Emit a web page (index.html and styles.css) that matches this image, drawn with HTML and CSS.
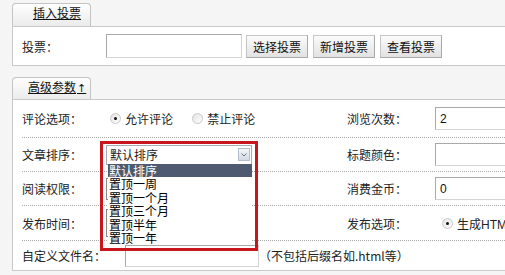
FILE: index.html
```html
<!DOCTYPE html>
<html lang="zh-CN">

<head>
    <meta charset="UTF-8">
    <title>高级参数</title>
    <link rel="stylesheet" href="styles.css">
</head>

<body>
    <div class="page">
        <div class="tab"><a href="#">插入投票</a></div>
        <div class="panel vote">
            <span class="label">投票：</span>
            <input type="text" class="text vote-input">
            <button class="btn">选择投票</button>
            <button class="btn">新增投票</button>
            <button class="btn">查看投票</button>
        </div>

        <div class="tab tab-adv"><a href="#">高级参数<span class="arrow">↑</span></a></div>
        <div class="panel params">
            <div class="row row-first">
                <div class="label">评论选项：</div>
                <div class="field">
                    <label class="radio"><input type="radio" name="comment" checked>允许评论</label>
                    <label class="radio radio-off"><input type="radio" name="comment">禁止评论</label>
                </div>
                <div class="label-r">浏览次数：</div>
                <div class="field-r"><input type="text" class="text short" value="2"></div>
            </div>
            <div class="row">
                <div class="label">文章排序：</div>
                <div class="field">
                    <div class="select">
                        <span class="select-value">默认排序</span>
                        <span class="select-arrow">
                            <svg width="6" height="4" viewBox="0 0 6 4"><path d="M0.5 0.5 L3 3 L5.5 0.5" fill="none" stroke="#6d7480" stroke-width="1"/></svg>
                        </span>
                        <ul class="dropdown">
                            <li class="active">默认排序</li>
                            <li>置顶一周</li>
                            <li>置顶一个月</li>
                            <li>置顶三个月</li>
                            <li>置顶半年</li>
                            <li>置顶一年</li>
                        </ul>
                        <div class="mark"></div>
                    </div>
                </div>
                <div class="label-r">标题颜色：</div>
                <div class="field-r"><input type="text" class="text short"></div>
            </div>
            <div class="row">
                <div class="label">阅读权限：</div>
                <div class="field"><span class="hidden-box box-read"></span></div>
                <div class="label-r">消费金币：</div>
                <div class="field-r"><input type="text" class="text short" value="0"></div>
            </div>
            <div class="row row-time">
                <div class="label">发布时间：</div>
                <div class="field"><span class="hidden-box box-time"></span></div>
                <div class="label-r">发布选项：</div>
                <div class="field-r">
                    <label class="radio"><input type="radio" name="publish" checked>生成HTML　仅动态浏览</label>
                </div>
            </div>
            <div class="row-last">
                <span class="label">自定义文件名：</span>
                <input type="text" class="text file-input">
                <span class="hint">（不包括后缀名如.html等）</span>
            </div>
        </div>
    </div>
</body>

</html>
```

FILE: styles.css
```css
* {
    box-sizing: border-box;
}

body {
    margin: 0;
    background: #f5f5f5;
    font: 12px "Liberation Sans", "Noto Sans CJK SC", sans-serif;
    color: #222;
    overflow: hidden;
}

.page {
    width: 505px;
    padding: 3px 0 0 12px;
}

/* 选项卡 */
.tab {
    width: 79px;
    height: 23px;
    padding-left: 20px;
    border: 1px solid #c4c4c4;
    border-bottom: 0;
    border-radius: 4px 4px 0 0;
    background: linear-gradient(#fefefe, #ebebeb);
    line-height: 21px;
    white-space: nowrap;
}

.tab a {
    color: #111;
}

.tab-adv {
    height: 22px;
    margin-top: 11px;
    padding-left: 15px;
    line-height: 20px;
}

.arrow {
    margin-left: 1px;
    font-family: "DejaVu Sans", sans-serif;
    font-size: 11px;
}

.panel {
    background: #fff;
    border: 1px solid #c9c9c9;
    border-right: 0;
}

.text {
    height: 23px;
    padding: 0 4px;
    border: 1px solid #a9a9a9;
    border-right-color: #d4d4d4;
    border-bottom-color: #d4d4d4;
    background: #fff;
    font: 12px "Liberation Sans", sans-serif;
    color: #111;
    outline: none;
}

/* 投票 */
.vote {
    display: flex;
    align-items: center;
    height: 40px;
    padding-left: 9px;
}

.vote .label {
    width: 84px;
}

.vote-input {
    width: 136px;
    height: 24px;
}

.btn {
    height: 23px;
    margin-left: 5px;
    padding: 0 6px;
    border: 1px solid #c6c6c6;
    border-right-color: #a8a8a8;
    border-bottom-color: #a8a8a8;
    background: linear-gradient(#fbfbfb, #e2e2e2);
    font: 12px "Noto Sans CJK SC", sans-serif;
    color: #111;
}

.vote-input + .btn {
    margin-left: 4px;
}

/* 高级参数 */
.params {
    padding-left: 9px;
}

.row {
    display: grid;
    grid-template-columns: 81px 240px 82px 1fr;
    align-items: center;
    height: 34px;
    border-bottom: 1px dotted #aaa;
}

.row-first {
    height: 38px;
}

.row-time {
    height: 35px;
}

.label-r {
    padding-right: 18px;
    text-align: right;
    white-space: nowrap;
}

.field-r {
    padding-left: 10px;
    white-space: nowrap;
}

.short {
    width: 100px;
}

.radio {
    display: inline-flex;
    align-items: center;
    white-space: nowrap;
}

.radio input {
    -webkit-appearance: none;
    appearance: none;
    position: relative;
    width: 11px;
    height: 11px;
    margin: 0 4px 0 7px;
    border: 1px solid #c9c9c9;
    border-radius: 50%;
    background: linear-gradient(135deg, #e4e4e4, #fdfdfd);
}

.radio input:checked::after {
    content: "";
    position: absolute;
    left: 3px;
    top: 3px;
    width: 3px;
    height: 3px;
    border-radius: 50%;
    background: #111;
}

.radio-off {
    margin-left: 9px;
}

/* 下拉框 */
.select {
    position: relative;
    display: flex;
    align-items: center;
    justify-content: space-between;
    width: 146px;
    height: 20px;
    margin-left: 3px;
    padding: 0 1px 0 3px;
    border: 1px solid #a5acb5;
    background: #fff;
    font-family: "Noto Sans CJK SC", sans-serif;
}

.select-arrow {
    display: flex;
    align-items: center;
    justify-content: center;
    width: 12px;
    height: 13px;
    border: 1px solid #b3bfcc;
    background: linear-gradient(#f3f6f9, #d3dae3);
}

.dropdown {
    position: absolute;
    left: 1px;
    right: -1px;
    top: 100%;
    margin: 0;
    padding: 0;
    list-style: none;
    background: #fff;
    z-index: 2;
}

.dropdown li {
    height: 13.6px;
    padding-left: 1px;
    line-height: 13px;
    color: #000;
}

.dropdown .active {
    background: #4d5a70;
    color: #fff;
}

/* 截图上的红框标注 */
.mark {
    position: absolute;
    left: -7px;
    top: -5px;
    width: 158px;
    height: 110px;
    border: 3px solid #c8161e;
    z-index: 3;
}

.hidden-box {
    display: block;
    width: 140px;
    margin-left: 3px;
    border: 1px solid #888;
}

.box-read {
    height: 22px;
}

.box-time {
    height: 28px;
}

.row-last {
    display: flex;
    align-items: center;
    height: 29px;
}

.row-last .label {
    width: 103px;
}

.file-input {
    width: 134px;
    height: 22px;
}

.hint {
    margin-left: 0;
    font-family: "Noto Sans CJK SC", monospace;
}
```
